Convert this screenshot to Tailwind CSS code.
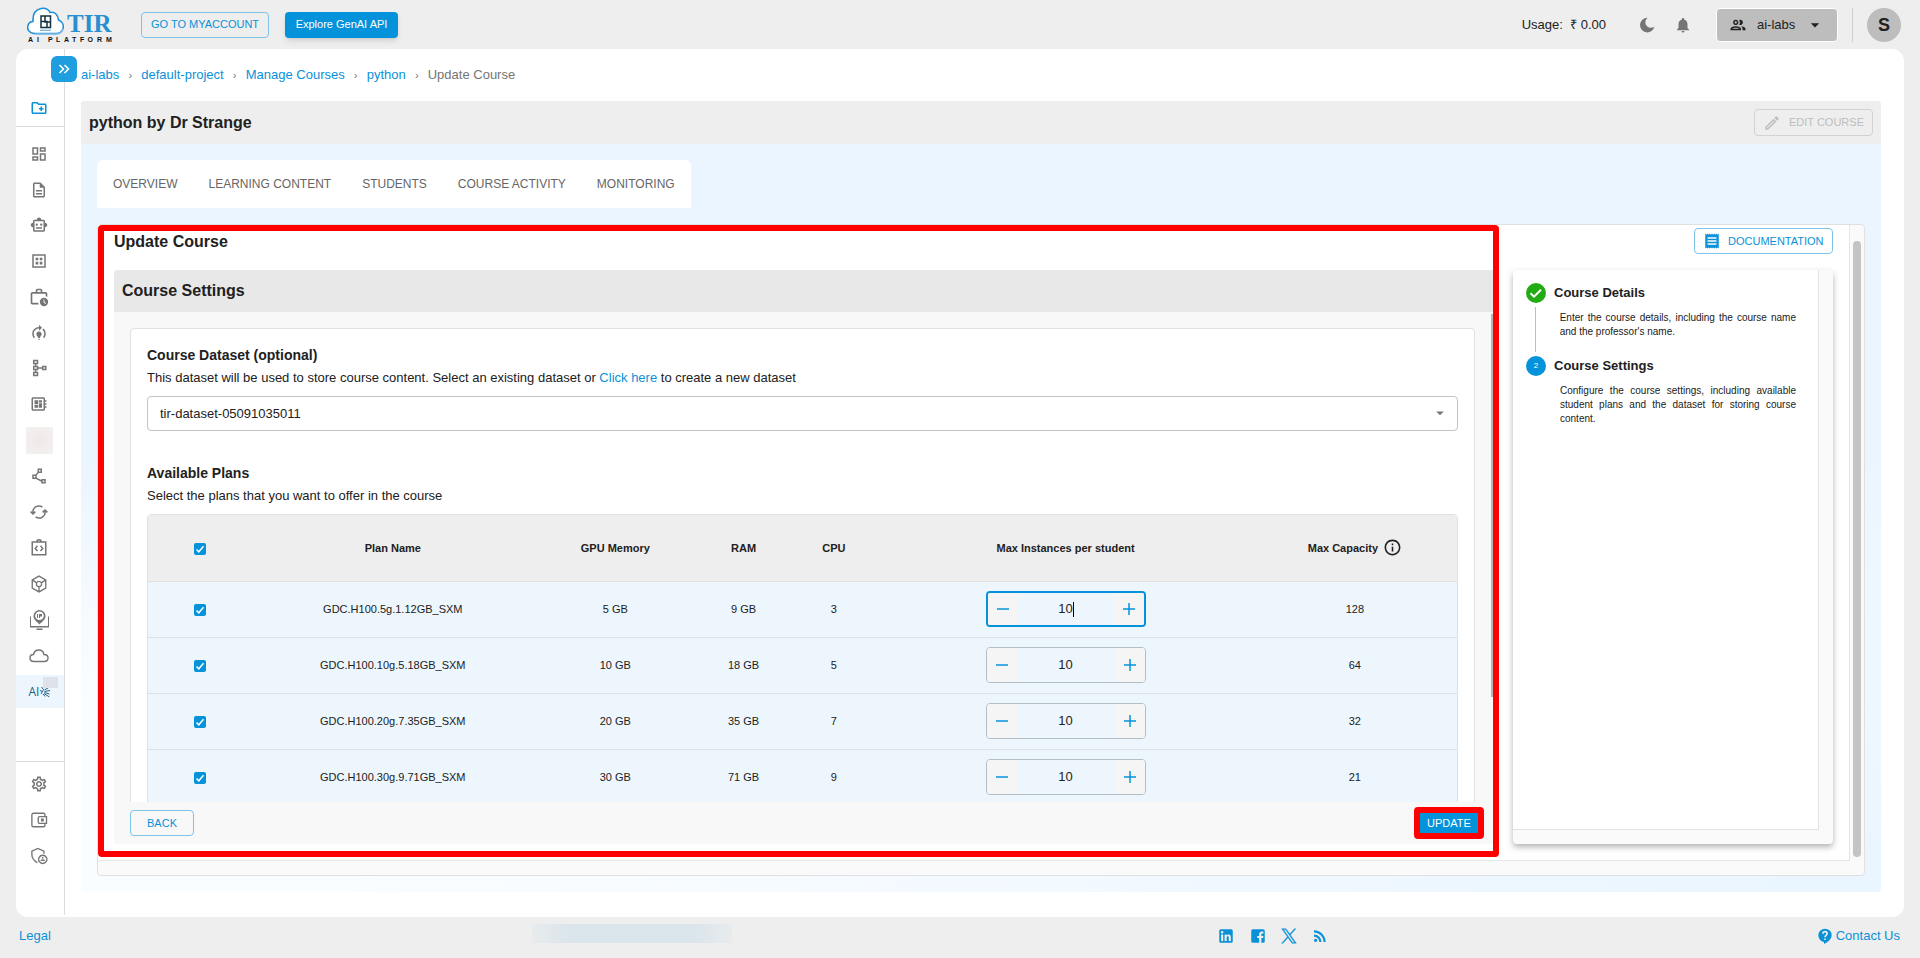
<!DOCTYPE html>
<html lang="en">
<head>
    <meta charset="UTF-8">
    <meta name="viewport" content="width=device-width, initial-scale=1.0">
    <title>TIR AI Platform - Update Course</title>
    <script src="https://cdn.jsdelivr.net/npm/@tailwindcss/browser@4"></script>
</head>
<body class="h-screen flex flex-col overflow-hidden bg-[#eeeeee] text-[#212121] text-[13px] font-['Liberation_Sans',Arial,sans-serif]">
    <!-- Top bar -->
    <header class="h-[49px] shrink-0 flex items-center pl-[27px] pr-[19px]">
        <a href="#" aria-label="TIR AI Platform">
            <svg class="w-[90px] h-[36px]" viewBox="0 0 90 36">
                <path d="M8 26.500C2 26.500 0 22 .8 19 1.500 16 4 14.500 6 14.500 5.500 6 9 2.500 14 1.500 18 .8 21.500 2.500 23 5.500 28 4.500 31 8 31.500 13 35 14.500 37 18 36 21.500 35 25 32 26.500 29 26.500Z" fill="#fff" stroke="#1d8fd6" stroke-width="1.600"/>
                <path d="M8 27H29C32 27 35 25 36 21.500" fill="none" stroke="#7fbbe4" stroke-width="1.600"/>
                <path d="M14 9h9.500v11.500H14zM18 9v6h5.500M14 14.500h6v6" fill="none" stroke="#16303f" stroke-width="1.500"/>
                <path d="M13 23.300h11" fill="none" stroke="#7fbbe4" stroke-width="1.400"/>
                <text x="40" y="24.500" font-family="Liberation Serif, serif" font-weight="700" font-size="25" fill="#2a8fd0">TIR</text>
                <g font-family="Liberation Sans, sans-serif" font-weight="700" font-size="7" fill="#111">
                    <text x="1 10" y="35">AI</text>
                    <text x="21 29 37 45 53 60.500 70 79" y="35">PLATFORM</text>
                </g>
            </svg>
        </a>
        <button class="ml-6 h-[26px] w-[128px] rounded border border-[#7cc4ea] text-[#0a91d8] text-[11px] whitespace-nowrap cursor-pointer">GO TO MYACCOUNT</button>
        <button class="ml-4 h-[26px] w-[113px] rounded bg-[#0492db] text-white text-[11px] shadow-md whitespace-nowrap cursor-pointer">Explore GenAI API</button>
        <div class="ml-auto flex items-center">
            <span>Usage:&nbsp; ₹ 0.00</span>
            <button class="ml-8 cursor-pointer" aria-label="Dark mode">
                <svg class="size-[18px] fill-[#757575]" viewBox="0 0 24 24"><path d="M12.500 2.500a9.700 9.700 0 1 0 9.400 11.500A6.300 6.300 0 1 1 12.500 2.500Z"/></svg>
            </button>
            <button class="ml-[18px] cursor-pointer" aria-label="Notifications">
                <svg class="size-[18px] fill-[#757575]" viewBox="0 0 24 24"><path d="M12 22c1.100 0 2-.9 2-2h-4c0 1.100.9 2 2 2zm6-6v-5c0-3.070-1.630-5.640-4.500-6.320V4c0-.83-.67-1.500-1.500-1.500s-1.500.67-1.500 1.500v.68C7.640 5.360 6 7.920 6 11v5l-2 2v1h16v-1l-2-2z"/></svg>
            </button>
            <button class="ml-6 h-[34px] w-[122px] flex items-center rounded border border-white bg-[#bdbdbd] px-3 cursor-pointer">
                <svg class="size-[18px] fill-[#212121]" viewBox="0 0 24 24"><path d="M9 13.750c-2.340 0-7 1.170-7 3.500V19h14v-1.750c0-2.330-4.660-3.500-7-3.500zM4.340 17c.84-.58 2.870-1.250 4.660-1.250s3.820.67 4.660 1.250H4.340zM9 12c1.930 0 3.500-1.570 3.500-3.500S10.930 5 9 5 5.500 6.570 5.500 8.500 7.070 12 9 12zm0-5c.83 0 1.500.67 1.500 1.500S9.830 10 9 10s-1.500-.67-1.500-1.500S8.170 7 9 7zm7.040 6.810c1.160.84 1.960 1.960 1.960 3.440V19h4v-1.750c0-2.020-3.500-3.170-5.960-3.440zM15 12c1.930 0 3.500-1.570 3.500-3.500S16.930 5 15 5c-.54 0-1.040.13-1.500.35.63.89 1 1.980 1 3.150s-.37 2.260-1 3.150c.46.220.96.350 1.500.350z"/></svg>
                <span class="ml-[10px]">ai-labs</span>
                <svg class="ml-auto size-5 fill-[#212121]" viewBox="0 0 24 24"><path d="m7 10 5 5 5-5z"/></svg>
            </button>
            <div class="ml-[14px] mr-[14px] w-px h-[34px] bg-[#cfcfcf]"></div>
            <button class="size-[34px] rounded-full bg-[#bdbdbd] font-bold text-lg cursor-pointer">S</button>
        </div>
    </header>

    <div class="relative flex-1 min-h-0 ml-4 mr-4 flex rounded-xl bg-white">
        <!-- Sidebar -->
        <aside class="w-[49px] shrink-0 flex flex-col border-r border-[#dcdcdc] mb-0.5">
            <a href="#" class="h-[78px] pt-[50px] pr-0.5 flex justify-center border-b border-[#dcdcdc]" aria-label="New project">
                <svg class="size-[18px] fill-[#0a91d8]" viewBox="0 0 24 24"><path d="M20 6h-8l-2-2H4c-1.110 0-1.990.89-1.990 2L2 18c0 1.110.89 2 2 2h16c1.110 0 2-.89 2-2V8c0-1.110-.89-2-2-2zm0 12H4V6h5.170l2 2H20v10zm-8-4h2v2h2v-2h2v-2h-2v-2h-2v2h-2z"/></svg>
            </a>
            <nav class="flex flex-col pt-[9px] text-[#757575] fill-current">
                <a href="#" class="h-9 pr-0.5 flex items-center justify-center" aria-label="Dashboard">
                    <svg class="size-[18px]" viewBox="0 0 24 24"><path d="M19 5v2h-4V5h4M9 5v6H5V5h4m10 8v6h-4v-6h4M9 17v2H5v-2h4M21 3h-8v6h8V3zM11 3H3v10h8V3zm10 8h-8v10h8V11zm-10 4H3v6h8v-6z"/></svg>
                </a>
                <a href="#" class="h-[35px] pr-0.5 flex items-center justify-center" aria-label="Notebooks">
                    <svg class="size-[18px]" viewBox="0 0 24 24"><path d="M8 16h8v2H8zm0-4h8v2H8zm6-10H6c-1.100 0-2 .9-2 2v16c0 1.100.89 2 1.990 2H18c1.100 0 2-.9 2-2V8l-6-6zm4 18H6V4h7v5h5v11z"/></svg>
                </a>
                <a href="#" class="h-9 pr-0.5 flex items-center justify-center" aria-label="GenAI">
                    <svg class="size-[18px]" viewBox="0 0 24 24"><path d="M20 9V7c0-1.100-.9-2-2-2h-3c0-1.660-1.340-3-3-3S9 3.340 9 5H6c-1.100 0-2 .9-2 2v2c-1.660 0-3 1.340-3 3s1.340 3 3 3v4c0 1.100.9 2 2 2h12c1.100 0 2-.9 2-2v-4c1.660 0 3-1.340 3-3s-1.340-3-3-3zm-2 10H6V7h12v12zm-9-6c-.83 0-1.500-.67-1.500-1.500S8.170 10 9 10s1.500.67 1.500 1.500S9.830 13 9 13zm7.500-1.500c0 .83-.67 1.500-1.500 1.500s-1.500-.67-1.500-1.500.67-1.500 1.500-1.500 1.500.67 1.500 1.500zM8 15h8v2H8v-2z"/></svg>
                </a>
                <a href="#" class="h-9 pr-0.5 flex items-center justify-center" aria-label="Datasets">
                    <svg class="size-[18px]" viewBox="0 0 24 24"><path d="M3 3v18h18V3H3zm16 16H5V5h14v14zM7.500 7.500h3.500V11H7.500zM13 7.500h3.500V11H13zM7.500 13h3.500v3.500H7.500zM13 13h3.500v3.500H13z"/></svg>
                </a>
                <a href="#" class="h-9 pr-0.5 flex items-center justify-center" aria-label="Jobs">
                    <svg class="size-5" viewBox="0 0 24 24"><path d="M4 8h16v3c.7.200 1.400.5 2 1V8c0-1.100-.9-2-2-2h-4V4c0-1.100-.9-2-2-2h-4C8.900 2 8 2.900 8 4v2H4c-1.100 0-2 .9-2 2v11c0 1.100.9 2 2 2h7.700c-.3-.6-.5-1.300-.6-2H4V8zm6-4h4v2h-4V4z"/><path d="M18 13a5 5 0 1 0 0 10 5 5 0 0 0 0-10zm1.700 7.300-2.200-2.100V15h1v2.800l1.900 1.800z"/></svg>
                </a>
                <a href="#" class="h-[35px] pr-0.5 flex items-center justify-center" aria-label="Fine tuning">
                    <svg class="size-[18px]" viewBox="0 0 24 24"><path d="M15.500 13.500c0 2-2.500 3.500-2.500 5h-2c0-1.500-2.500-3-2.500-5 0-1.930 1.570-3.500 3.500-3.500s3.500 1.570 3.500 3.500zm-2.500 6h-2V21h2v-1.500zm6-6.500c0 1.680-.59 3.210-1.580 4.420l1.420 1.420C20.180 17.270 21 15.230 21 13c0-2.740-1.230-5.190-3.160-6.840l-1.420 1.420C17.990 8.860 19 10.820 19 13zm-3-8-4-4v3c-4.970 0-9 4.030-9 9 0 2.230.82 4.270 2.160 5.840l1.420-1.420C5.590 16.210 5 14.680 5 13c0-3.860 3.140-7 7-7v3l4-4z"/></svg>
                </a>
                <a href="#" class="h-9 pr-0.5 flex items-center justify-center" aria-label="Pipelines">
                    <svg class="size-[18px] fill-none stroke-current stroke-2" viewBox="0 0 24 24"><path d="M5 2h5v4H5zM5 10h5v4H5zM5 18h5v4H5zM17 10h4v4h-4zM7.500 6v4M7.500 14v4M10 12h7"/></svg>
                </a>
                <a href="#" class="h-9 pr-0.5 flex items-center justify-center" aria-label="Inference">
                    <svg class="size-[18px]" viewBox="0 0 24 24"><path d="M22 9V7h-2V5c0-1.100-.9-2-2-2H4c-1.100 0-2 .9-2 2v14c0 1.100.9 2 2 2h14c1.100 0 2-.9 2-2v-2h2v-2h-2v-2h2v-2h-2V9h2zm-4 10H4V5h14v14zM6 13h5v4H6zm6-6h4v3h-4zM6 7h5v5H6zm6 4h4v6h-4z"/></svg>
                </a>
                <div class="h-9 pr-0.5 flex items-center justify-center">
                    <div class="size-[27px] bg-[radial-gradient(circle,#f0e8e8,#f4f1f1)]"></div>
                </div>
                <a href="#" class="h-9 pr-0.5 flex items-center justify-center" aria-label="Vector database">
                    <svg class="size-[18px]" viewBox="0 0 24 24"><path d="M15 16v1.260l-6-3v-3.170L11.700 8H16V2h-6v4.900L7.300 10H3v6h5l7 3.500V22h6v-6h-6zM12 4h2v2h-2V4zM7 14H5v-2h2v2zm12 6h-2v-2h2v2z"/></svg>
                </a>
                <a href="#" class="h-9 pr-0.5 flex items-center justify-center" aria-label="Sync">
                    <svg class="size-[18px] fill-none stroke-current stroke-2" viewBox="0 0 24 24"><path d="M4 13.500A8 8 0 0 1 16.500 5.500M20 10.500A8 8 0 0 1 7.500 18.500M.8 11.500 4 14.500l3.200-3M16.800 12.500 20 9.500l3.200 3"/></svg>
                </a>
                <a href="#" class="h-9 pr-0.5 flex items-center justify-center" aria-label="Container registry">
                    <svg class="size-[18px] fill-none stroke-current stroke-2" viewBox="0 0 24 24"><path d="M3 4h18v17H3zM9 4a3 3 0 0 1 6 0M10 9l-3 3.500 3 3.500M14 9l3 3.500-3 3.500"/></svg>
                </a>
                <a href="#" class="h-9 pr-0.5 flex items-center justify-center" aria-label="Model repository">
                    <svg class="size-[18px] fill-none stroke-current stroke-[1.800]" viewBox="0 0 24 24"><path d="M12 1.500 21 6.500v11L12 22.500 3 17.500v-11zM3 6.500l6 4M21 6.500l-6 4M12 15.500v7M12 8.500a3.500 3.500 0 1 0 .01 0z"/></svg>
                </a>
                <a href="#" class="h-9 pr-0.5 flex items-center justify-center" aria-label="Reserved IP">
                    <svg class="size-[21px]" viewBox="0 0 21 21"><path d="M2 6.500H1v11h19v-11h-1v9.500H2zM7.500 18.500h6v1.500h-6z"/><path fill-rule="evenodd" d="M10.500 0A6 6 0 0 0 4.500 6c0 4 4 6 6 8.500 2-2.500 6-4.500 6-8.500a6 6 0 0 0-6-6zm0 1.500a4.300 4.300 0 1 1 0 8.600 4.300 4.300 0 0 1 0-8.600z"/><path d="M8 4h1v4H8zM10 4h3v2.500h-2V8h-1z"/></svg>
                </a>
                <a href="#" class="h-[35px] pr-0.5 flex items-center justify-center" aria-label="Storage">
                    <svg class="w-5 h-[14px] fill-none stroke-current stroke-[1.400]" viewBox="0 0 20 14"><path d="M5 12.500C2.500 12.500 1 11 1 9s1.500-3.500 3.500-3.500C5 3 7 1 9.800 1c3 0 4.700 2 5.200 4.500 2.500 0 4 1.500 4 3.500s-1.500 3.500-4 3.500z"/></svg>
                </a>
                <a href="#" class="relative h-[33px] mt-0.5 flex items-center justify-center gap-px bg-[#edf6fd] text-[#1c5f86]" aria-label="AI labs">
                    <span class="text-xs font-['Open_Sans',sans-serif]">AI</span>
                    <svg class="size-[11px] fill-none stroke-current stroke-1" viewBox="0 0 11 11"><path d="M0 4.500 2.500 5.500 1 8M1.500 1 3.500 3.500 2.500 5.500M4.500 4l5-3M4.500 5.500 10 4.500M4.500 6.500l5 1.500M4 7.500l5.500 3.500M3 8l2 2.500"/></svg>
                    <span class="absolute top-0.5 right-[6px] w-[15px] h-[11px] bg-[#dfe2ea]"></span>
                </a>
            </nav>
            <div class="mt-auto mb-[41px] flex flex-col border-t border-[#dcdcdc] pt-1 text-[#757575] fill-current">
                <a href="#" class="h-9 pr-0.5 flex items-center justify-center" aria-label="Settings">
                    <svg class="size-[18px]" viewBox="0 0 24 24"><path d="M19.430 12.980c.04-.32.070-.64.070-.98 0-.34-.03-.66-.07-.98l2.110-1.650c.19-.15.240-.42.120-.64l-2-3.460c-.09-.16-.26-.25-.44-.25-.06 0-.12.010-.17.030l-2.490 1c-.52-.4-1.080-.73-1.690-.98l-.38-2.650C14.460 2.180 14.250 2 14 2h-4c-.25 0-.46.180-.49.420l-.38 2.650c-.61.250-1.170.59-1.690.98l-2.490-1c-.06-.02-.12-.03-.18-.03-.17 0-.34.090-.43.250l-2 3.460c-.13.220-.07.490.120.640l2.110 1.650c-.04.320-.07.650-.07.980 0 .33.030.66.070.980l-2.110 1.650c-.19.150-.24.420-.12.640l2 3.460c.09.160.26.250.44.250.06 0 .12-.01.170-.03l2.490-1c.52.400 1.080.73 1.690.98l.38 2.650c.03.240.24.420.49.420h4c.25 0 .46-.18.490-.42l.38-2.650c.61-.25 1.170-.59 1.690-.98l2.490 1c.06.020.12.030.18.030.17 0 .34-.09.430-.25l2-3.460c.12-.22.070-.49-.12-.64l-2.110-1.650zm-1.980-1.710c.04.310.05.520.05.730 0 .21-.02.430-.05.730l-.14 1.130.89.700 1.080.84-.7 1.210-1.270-.51-1.040-.42-.9.680c-.43.320-.84.560-1.250.730l-1.060.43-.16 1.130-.2 1.350h-1.400l-.19-1.350-.16-1.130-1.060-.43c-.43-.18-.83-.41-1.230-.71l-.91-.7-1.060.43-1.270.51-.7-1.210 1.080-.84.89-.7-.14-1.130c-.03-.31-.05-.54-.05-.74s.02-.43.050-.73l.14-1.130-.89-.7-1.080-.84.7-1.210 1.270.51 1.040.42.9-.68c.43-.32.84-.56 1.250-.73l1.060-.43.160-1.130.2-1.350h1.390l.19 1.350.16 1.130 1.060.43c.43.180.83.410 1.230.710l.91.700 1.060-.43 1.270-.51.7 1.210-1.070.85-.89.7.140 1.130zM12 8c-2.210 0-4 1.790-4 4s1.790 4 4 4 4-1.790 4-4-1.790-4-4-4zm0 6c-1.100 0-2-.9-2-2s.9-2 2-2 2 .9 2 2-.9 2-2 2z"/></svg>
                </a>
                <a href="#" class="h-9 pr-0.5 flex items-center justify-center" aria-label="Billing">
                    <svg class="size-[18px] fill-none stroke-current stroke-[1.800]" viewBox="0 0 24 24"><path d="M20 7V5a2 2 0 0 0-2-2H4.500a2 2 0 0 0-2 2v14a2 2 0 0 0 2 2H18a2 2 0 0 0 2-2v-2M13 7.500h9v9h-9a2 2 0 0 1-2-2v-5a2 2 0 0 1 2-2zM15.500 11v2h2v-2z"/></svg>
                </a>
                <a href="#" class="h-9 pr-0.5 flex items-center justify-center" aria-label="Security">
                    <svg class="size-[18px] fill-none stroke-current stroke-[1.800]" viewBox="0 0 24 24"><path d="M10 21C5.500 18.500 2.500 14.500 2.500 10V5.500L10.500 2l8 3.500V9M17 11a5.500 5.500 0 1 0 .01 0zM17 13.200v2.300M14.500 18.500c1-1.500 4-1.500 5 0"/></svg>
                </a>
            </div>
        </aside>
        <button class="absolute left-[35px] top-[7px] size-[26px] flex items-center justify-center rounded-md bg-[#1e9ddf] cursor-pointer" aria-label="Expand sidebar">
            <svg class="size-3 fill-none stroke-white stroke-[3.200]" viewBox="0 0 24 24"><path d="m3 4 8 8-8 8M13 4l8 8-8 8"/></svg>
        </button>

        <main class="flex-1 min-w-0 flex flex-col pl-4 pr-[23px] pb-[25px]">
            <!-- Breadcrumb -->
            <nav class="h-[52px] shrink-0 flex items-center text-[#0a91d8]" aria-label="Breadcrumb">
                <a href="#">ai-labs</a><span class="w-[22px] text-center text-[11px] text-[#757575]">›</span>
                <a href="#">default-project</a><span class="w-[22px] text-center text-[11px] text-[#757575]">›</span>
                <a href="#">Manage Courses</a><span class="w-[22px] text-center text-[11px] text-[#757575]">›</span>
                <a href="#">python</a><span class="w-[22px] text-center text-[11px] text-[#757575]">›</span>
                <span class="text-[#757575]">Update Course</span>
            </nav>

            <section class="flex-1 min-h-0 flex flex-col rounded overflow-hidden bg-[radial-gradient(ellipse_at_bottom_right,#e9f5ff,transparent_60%),linear-gradient(180deg,#ebf5ff_45%,#fafdff_75%)]">
                <div class="h-[43px] shrink-0 flex items-center justify-between px-2 bg-[#eeeeee]">
                    <h1 class="text-base font-bold">python by Dr Strange</h1>
                    <button disabled class="h-[27px] w-[119px] flex items-center pl-2 rounded border border-[#d2d2d2] text-[11px] text-[#bdbdbd]">
                        <svg class="size-[18px] fill-current mr-2" viewBox="0 0 24 24"><path d="m14.060 9.020.92.920L5.920 19H5v-.92l9.060-9.060M17.660 3c-.25 0-.51.100-.7.290l-1.830 1.830 3.750 3.750 1.830-1.830c.39-.39.390-1.020 0-1.410l-2.340-2.340c-.2-.2-.45-.29-.71-.29zm-3.600 3.190L3 17.250V21h3.750L17.810 9.940l-3.750-3.750z"/></svg>
                        EDIT COURSE
                    </button>
                </div>

                <div class="flex-1 min-h-0 flex flex-col items-start p-4">
                    <nav class="h-12 shrink-0 flex items-center gap-[31px] px-4 rounded-t-md bg-white text-xs text-[#666666]">
                        <a href="#">OVERVIEW</a>
                        <a href="#">LEARNING CONTENT</a>
                        <a href="#">STUDENTS</a>
                        <a href="#">COURSE ACTIVITY</a>
                        <a href="#">MONITORING</a>
                    </nav>

                    <div class="mt-4 w-full flex-1 min-h-0 flex flex-col rounded border border-[#e0e0e0] bg-[#fafafa]">
                        <div class="relative flex-1 min-h-0 flex mr-[14px] mb-[14px] pb-[3px] pr-4 gap-[14px] border-r border-b border-[#e6e6e6] bg-white">
                            <!-- Form -->
                            <div class="relative flex-1 min-w-0 flex flex-col pl-4 pr-[6px] pb-[13px]">
                                <h2 class="h-[45px] shrink-0 pt-[5px] text-base font-bold">Update Course</h2>
                                <form class="relative flex-1 min-h-0 flex flex-col bg-[#f8f8f8] rounded-tl">
                                    <h3 class="h-[42px] shrink-0 flex items-center px-2 rounded-tl bg-[#e8e8e8] text-base font-bold">Course Settings</h3>
                                    <div class="flex-1 min-h-0 overflow-hidden pl-4 pr-[18px] pt-4">
                                        <div class="px-4 pt-4 rounded border border-[#e2e2e2] bg-white">
                                            <label for="dataset" class="block text-sm leading-5 font-bold">Course Dataset (optional)</label>
                                            <p class="mt-[3px] leading-5">This dataset will be used to store course content. Select an existing dataset or <a href="#" class="text-[#0a91d8]">Click here</a> to create a new dataset</p>
                                            <div class="relative mt-2">
                                                <select id="dataset" class="block w-full h-[35px] appearance-none rounded border border-[#c4c4c4] bg-white px-3">
                                                    <option>tir-dataset-05091035011</option>
                                                </select>
                                                <svg class="absolute right-[9px] top-2 size-[18px] fill-[#757575] pointer-events-none" viewBox="0 0 24 24"><path d="m7 10 5 5 5-5z"/></svg>
                                            </div>
                                            <h4 class="mt-8 text-sm leading-5 font-bold">Available Plans</h4>
                                            <p class="mt-[3px] leading-5">Select the plans that you want to offer in the course</p>
                                            <div class="mt-2 rounded-t border border-[#e0e0e0]">
                                                <table class="w-full table-fixed text-[11px] text-center">
                                                    <thead class="bg-[#eeeeee]">
                                                        <tr class="h-[66px] border-b border-[#e0e0e0]">
                                                            <th class="w-[8%]">
                                                                <span class="relative inline-block size-3 align-middle">
                                                                    <input type="checkbox" checked aria-label="Select all plans" class="absolute inset-0 size-3 appearance-none rounded-xs bg-[#0492db]">
                                                                    <svg class="absolute inset-0 size-3 fill-none stroke-white stroke-[1.500] pointer-events-none" viewBox="0 0 12 12"><path d="m2.500 6.500 2.300 2.300 4.700-5.600"/></svg>
                                                                </span>
                                                            </th>
                                                            <th class="w-[21.4%]">Plan Name</th>
                                                            <th class="w-[12.6%]">GPU Memory</th>
                                                            <th class="w-[7%]">RAM</th>
                                                            <th class="w-[6.8%]">CPU</th>
                                                            <th class="w-[28.6%]">Max Instances per student</th>
                                                            <th>
                                                                <span class="inline-flex items-center gap-[5px]">
                                                                    Max Capacity
                                                                    <svg class="size-[19px] fill-[#212121]" viewBox="0 0 24 24"><path d="M11 7h2v2h-2zm0 4h2v6h-2zm1-9C6.480 2 2 6.480 2 12s4.480 10 10 10 10-4.480 10-10S17.520 2 12 2zm0 18c-4.410 0-8-3.590-8-8s3.590-8 8-8 8 3.590 8 8-3.590 8-8 8z"/></svg>
                                                                </span>
                                                            </th>
                                                        </tr>
                                                    </thead>
                                                    <tbody id="plansTable" class="bg-[#edf6fd]"></tbody>
                                                </table>
                                            </div>
                                        </div>
                                    </div>
                                    <div class="h-[42px] shrink-0 flex items-center justify-between pl-4 pr-[9px]">
                                        <button type="button" class="h-[26px] w-16 rounded border border-[#7cc4ea] text-[#0a91d8] text-[11px] cursor-pointer">BACK</button>
                                        <button type="submit" class="relative z-10 h-8 w-[70px] rounded border-[6px] border-[#ff0000] bg-[#ff0000] text-[11px] text-white cursor-pointer"><span class="block h-5 leading-5 bg-[#0492db]">UPDATE</span></button>
                                    </div>
                                    <div class="absolute right-0 top-[44px] w-0.5 h-[383px] bg-[#b5b5b5]"></div>
                                </form>
                                <div class="absolute inset-0 rounded-sm border-[6px] border-[#ff0000] pointer-events-none"></div>
                            </div>

                            <!-- Steps -->
                            <div class="w-[320px] shrink-0 flex flex-col pt-[3px] pb-[13px]">
                                <button class="self-end h-[26px] w-[139px] shrink-0 flex items-center pl-2 rounded border border-[#7cc4ea] text-[#0a91d8] text-[11px] cursor-pointer">
                                    <svg class="size-[18px] fill-current mr-[7px]" viewBox="0 0 24 24"><path d="M18 17H6v-2h12v2zm0-4H6v-2h12v2zm0-4H6V7h12v2zM3 22l1.500-1.500L6 22l1.500-1.500L9 22l1.500-1.500L12 22l1.500-1.500L15 22l1.500-1.500L18 22l1.500-1.500L21 22V2l-1.500 1.500L18 2l-1.500 1.500L15 2l-1.500 1.500L12 2l-1.500 1.500L9 2 7.500 3.500 6 2 4.500 3.500 3 2v20z"/></svg>
                                    DOCUMENTATION
                                </button>
                                <div class="mt-4 flex-1 min-h-0 flex flex-col rounded bg-[#fafafa] shadow-[0_3px_6px_rgba(0,0,0,0.3)]">
                                    <ol class="flex-1 mr-[14px] mb-[14px] pl-[13px] pr-[22px] pt-[13px] rounded-tl border-r border-b border-[#e2e2e2] bg-white">
                                        <li>
                                            <div class="flex items-center gap-2">
                                                <svg class="size-5" viewBox="0 0 20 20"><circle cx="10" cy="10" r="10" fill="#22ab13"/><path d="m4.500 10.200 3.500 3.500 7-7" fill="none" stroke="#fff" stroke-width="2"/></svg>
                                                <h5 class="text-[13px] leading-5 font-bold">Course Details</h5>
                                            </div>
                                            <div class="flex">
                                                <div class="my-1 ml-[9px] w-px h-[45px] bg-[#bdbdbd]"></div>
                                                <p class="ml-6 mt-2 text-[10px] leading-[14px] text-justify">Enter the course details, including the course name and the professor's name.</p>
                                            </div>
                                        </li>
                                        <li>
                                            <div class="flex items-center gap-2">
                                                <span class="size-5 rounded-full bg-[#0492db] text-white text-[8px] leading-5 text-center">2</span>
                                                <h5 class="text-[13px] leading-5 font-bold">Course Settings</h5>
                                            </div>
                                            <p class="ml-[34px] mt-2 text-[10px] leading-[14px] text-justify">Configure the course settings, including available student plans and the dataset for storing course content.</p>
                                        </li>
                                    </ol>
                                </div>
                            </div>
                            <div class="absolute -right-[12px] top-4 bottom-[3px] w-2 rounded-full bg-[#c4c4c4]"></div>
                        </div>
                    </div>
                </div>
            </section>
        </main>
    </div>

    <!-- Footer -->
    <footer class="h-[41px] shrink-0 flex items-center pl-[19px] pr-5 pb-1 text-[#0a91d8]">
        <a href="#">Legal</a>
        <div class="ml-[481px] mb-1 w-[200px] h-[19px] bg-[linear-gradient(90deg,#e8ebed,#dae5ec_20%,#dae5ec_80%,#e8ebed)]"></div>
        <div class="ml-auto mr-[488px] flex items-center gap-[14px] fill-current">
            <a href="#" aria-label="LinkedIn"><svg class="size-[18px]" viewBox="0 0 24 24"><path d="M19 3a2 2 0 0 1 2 2v14a2 2 0 0 1-2 2H5a2 2 0 0 1-2-2V5a2 2 0 0 1 2-2h14m-.5 15.500v-5.300a3.260 3.260 0 0 0-3.260-3.260c-.85 0-1.840.52-2.320 1.300v-1.110h-2.790v8.370h2.790v-4.930c0-.77.620-1.400 1.390-1.400a1.400 1.400 0 0 1 1.400 1.400v4.930h2.790M6.880 8.560a1.680 1.680 0 0 0 1.680-1.680c0-.93-.75-1.690-1.680-1.690a1.690 1.690 0 0 0-1.690 1.690c0 .93.76 1.680 1.690 1.680m1.390 9.940v-8.370H5.500v8.370h2.770z"/></svg></a>
            <a href="#" aria-label="Facebook"><svg class="size-[18px]" viewBox="0 0 24 24"><path d="M5 3h14a2 2 0 0 1 2 2v14a2 2 0 0 1-2 2h-2.500v-6.300h2.300l.4-2.800h-2.700V10c0-.9.400-1.400 1.500-1.400h1.300V6.100C18.800 6 18 5.900 17.200 5.900c-2.300 0-3.700 1.400-3.700 3.800v2.200H11v2.800h2.500V21H5a2 2 0 0 1-2-2V5a2 2 0 0 1 2-2z"/></svg></a>
            <a href="#" aria-label="X"><svg class="size-4" viewBox="0 0 24 24"><path stroke="currentColor" stroke-width=".6" d="M14.095 10.316 22.286 1h-1.940L13.230 9.088 7.551 1H1l8.590 12.231L1 23h1.940l7.510-8.543L16.450 23H23l-8.905-12.684zm-2.658 3.022-.872-1.218L3.640 2.432h2.980l5.590 7.821.869 1.219 7.265 10.166h-2.982l-5.926-8.300z"/></svg></a>
            <a href="#" aria-label="Blog"><svg class="size-[18px]" viewBox="0 0 24 24"><circle cx="6.180" cy="17.820" r="2.180"/><path d="M4 4.440v2.830c7.030 0 12.730 5.700 12.730 12.730h2.830c0-8.590-6.970-15.560-15.560-15.560zm0 5.660v2.830c3.900 0 7.070 3.170 7.070 7.070h2.830c0-5.470-4.430-9.900-9.900-9.900z"/></svg></a>
        </div>
        <a href="#" class="flex items-center gap-[3px]">
            <svg class="size-4 fill-current" viewBox="0 0 24 24"><path fill-rule="evenodd" d="M12 1a10 10 0 0 0-1.500 19.900V24c5.500-2.500 11.500-7 11.500-13A10 10 0 0 0 12 1zm1.200 17h-2.400v-2.400h2.400zm.1-4h-2.500c0-3.600 3-3.500 3-5.500a1.900 1.900 0 0 0-3.800 0H7.600a4.400 4.400 0 0 1 8.800 0c0 2.700-3.100 3-3.100 5.500z"/></svg>
            Contact Us
        </a>
    </footer>

    <script>
        const plans = [
            { name: 'GDC.H100.5g.1.12GB_SXM', gpu: '5 GB', ram: '9 GB', cpu: 3, instances: 10, capacity: 128, focused: true },
            { name: 'GDC.H100.10g.5.18GB_SXM', gpu: '10 GB', ram: '18 GB', cpu: 5, instances: 10, capacity: 64 },
            { name: 'GDC.H100.20g.7.35GB_SXM', gpu: '20 GB', ram: '35 GB', cpu: 7, instances: 10, capacity: 32 },
            { name: 'GDC.H100.30g.9.71GB_SXM', gpu: '30 GB', ram: '71 GB', cpu: 9, instances: 10, capacity: 21 },
        ];

        const plansTable = document.getElementById('plansTable');
        plans.forEach(plan => {
            const border = plan.focused ? 'border-2 border-[#0492db]' : 'border border-[#b4bec5]';
            plansTable.innerHTML += `
                <tr class="h-14 border-b border-[#dde1e4]">
                    <td>
                        <span class="relative inline-block size-3 align-middle">
                            <input type="checkbox" checked aria-label="${plan.name}" class="absolute inset-0 size-3 appearance-none rounded-xs bg-[#0492db]">
                            <svg class="absolute inset-0 size-3 fill-none stroke-white stroke-[1.500] pointer-events-none" viewBox="0 0 12 12"><path d="m2.500 6.500 2.300 2.300 4.700-5.600"/></svg>
                        </span>
                    </td>
                    <td>${plan.name}</td>
                    <td>${plan.gpu}</td>
                    <td>${plan.ram}</td>
                    <td>${plan.cpu}</td>
                    <td>
                        <div class="relative mx-auto w-40 h-9 flex rounded overflow-hidden ${border}">
                            <button type="button" aria-label="Decrease" class="w-[30px] flex items-center justify-center bg-[#f5f5f5] cursor-pointer">
                                <svg class="size-3 stroke-[#0492db] stroke-[1.500]" viewBox="0 0 12 12"><path d="M0 6h12"/></svg>
                            </button>
                            <input type="text" value="${plan.instances}" aria-label="Max instances for ${plan.name}" class="flex-1 min-w-0 text-center text-[13px]">
                            <button type="button" aria-label="Increase" class="w-[30px] flex items-center justify-center bg-[#f5f5f5] cursor-pointer">
                                <svg class="size-3 stroke-[#0492db] stroke-[1.500]" viewBox="0 0 12 12"><path d="M0 6h12M6 0v12"/></svg>
                            </button>
                            ${plan.focused ? '<span class="absolute left-[85px] top-[9px] w-px h-[15px] bg-black"></span>' : ''}
                        </div>
                    </td>
                    <td>${plan.capacity}</td>
                </tr>
            `;
        });
    </script>
</body>
</html>
